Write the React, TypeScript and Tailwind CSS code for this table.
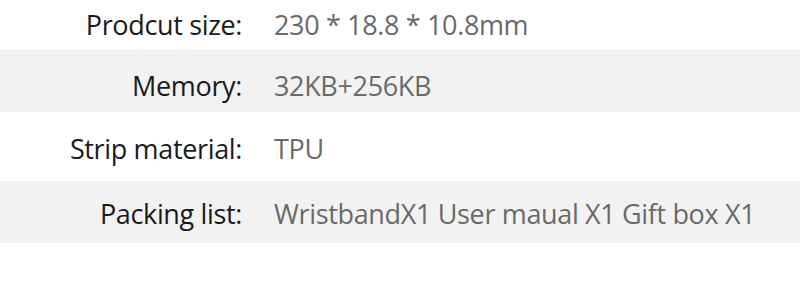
const rows = [
  { label: 'Prodcut size:', value: '230 * 18.8 * 10.8mm', cls: 'h-[50px] pt-[7px] bg-white' },
  { label: 'Memory:', value: '32KB+256KB', cls: 'h-[62px] pt-[18px] bg-[#f2f2f2]' },
  { label: 'Strip material:', value: 'TPU', cls: 'h-[69px] pt-[19px] bg-white' },
  { label: 'Packing list:', value: 'WristbandX1 User maual X1 Gift box X1', cls: 'h-[62px] pt-[15px] bg-[#f2f2f2]' },
];

export default function App() {
  return (
    <div className="w-[800px] h-[283px] bg-white font-['Open_Sans',sans-serif] text-[27px] leading-[36px] tracking-[-0.35px] overflow-hidden">
      {rows.map((r) => (
        <div key={r.label} className={`flex gap-[32px] ${r.cls}`}>
          <div className="w-[242px] shrink-0 text-right text-[#1a1a1a]">{r.label}</div>
          <div className="text-[#6a6a6a] whitespace-nowrap">{r.value}</div>
        </div>
      ))}
    </div>
  );
}
